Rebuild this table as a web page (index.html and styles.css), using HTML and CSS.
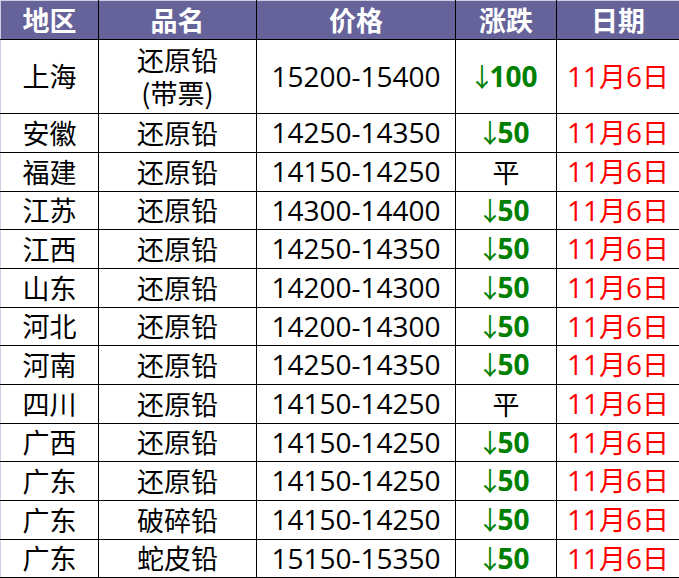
FILE: index.html
```html
<!DOCTYPE html>
<html lang="zh">
<head>
<meta charset="utf-8">
<link rel="stylesheet" href="styles.css">
</head>
<body>
<table class="price-table">
  <colgroup>
    <col class="c1"><col class="c2"><col class="c3"><col class="c4"><col class="c5">
  </colgroup>
  <thead>
    <tr class="head"><th>地区</th><th>品名</th><th>价格</th><th>涨跌</th><th>日期</th></tr>
  </thead>
  <tbody>
    <tr class="tall"><td>上海</td><td class="two">还原铅<br>(带票)</td><td class="num">15200-15400</td><td class="down"><span class="arr">↓</span>100</td><td class="date"><span class="n">11</span>月<span class="n">6</span>日</td></tr>
    <tr class="r39"><td>安徽</td><td>还原铅</td><td class="num">14250-14350</td><td class="down"><span class="arr">↓</span>50</td><td class="date"><span class="n">11</span>月<span class="n">6</span>日</td></tr>
    <tr class="r39"><td>福建</td><td>还原铅</td><td class="num">14150-14250</td><td class="flat">平</td><td class="date"><span class="n">11</span>月<span class="n">6</span>日</td></tr>
    <tr class="r38"><td>江苏</td><td>还原铅</td><td class="num">14300-14400</td><td class="down"><span class="arr">↓</span>50</td><td class="date"><span class="n">11</span>月<span class="n">6</span>日</td></tr>
    <tr class="r39"><td>江西</td><td>还原铅</td><td class="num">14250-14350</td><td class="down"><span class="arr">↓</span>50</td><td class="date"><span class="n">11</span>月<span class="n">6</span>日</td></tr>
    <tr class="r39"><td>山东</td><td>还原铅</td><td class="num">14200-14300</td><td class="down"><span class="arr">↓</span>50</td><td class="date"><span class="n">11</span>月<span class="n">6</span>日</td></tr>
    <tr class="r38"><td>河北</td><td>还原铅</td><td class="num">14200-14300</td><td class="down"><span class="arr">↓</span>50</td><td class="date"><span class="n">11</span>月<span class="n">6</span>日</td></tr>
    <tr class="r39"><td>河南</td><td>还原铅</td><td class="num">14250-14350</td><td class="down"><span class="arr">↓</span>50</td><td class="date"><span class="n">11</span>月<span class="n">6</span>日</td></tr>
    <tr class="r39"><td>四川</td><td>还原铅</td><td class="num">14150-14250</td><td class="flat">平</td><td class="date"><span class="n">11</span>月<span class="n">6</span>日</td></tr>
    <tr class="r38"><td>广西</td><td>还原铅</td><td class="num">14150-14250</td><td class="down"><span class="arr">↓</span>50</td><td class="date"><span class="n">11</span>月<span class="n">6</span>日</td></tr>
    <tr class="r39"><td>广东</td><td>还原铅</td><td class="num">14150-14250</td><td class="down"><span class="arr">↓</span>50</td><td class="date"><span class="n">11</span>月<span class="n">6</span>日</td></tr>
    <tr class="r39"><td>广东</td><td>破碎铅</td><td class="num">14150-14250</td><td class="down"><span class="arr">↓</span>50</td><td class="date"><span class="n">11</span>月<span class="n">6</span>日</td></tr>
    <tr class="r38"><td>广东</td><td>蛇皮铅</td><td class="num">15150-15350</td><td class="down"><span class="arr">↓</span>50</td><td class="date"><span class="n">11</span>月<span class="n">6</span>日</td></tr>
  </tbody>
</table>
</body>
</html>
```
FILE: styles.css
```css
html, body {
  margin: 0;
  padding: 0;
  background: #ffffff;
}
.price-table {
  border-collapse: collapse;
  table-layout: fixed;
  width: 679px;
  font-family: "Noto Sans CJK SC", "Noto Sans", sans-serif;
  font-size: 27px;
  color: #000;
}
.c1 { width: 98px; }
.c2 { width: 158px; }
.c3 { width: 199px; }
.c4 { width: 101px; }
.c5 { width: 123px; }
.price-table th,
.price-table td {
  border: 1px solid #000;
  padding: 0;
  text-align: center;
  vertical-align: middle;
  line-height: 1.2;
  white-space: nowrap;
}
.price-table tr > :first-child { border-left-color: #cfd0e2; }
.head th {
  background: #66639b;
  color: #fff;
  font-weight: bold;
  height: 38px;
  line-height: 1.1;
  border-top-color: #cfd0e2;
}
.tall td { height: 73px; }
.two { line-height: 1.26; }
.r39 td { height: 38px; }
.r38 td { height: 37px; }
.num {
  font-family: "Open Sans", "Noto Sans CJK SC", sans-serif;
  font-size: 28px;
}
.down {
  color: #008000;
  font-weight: bold;
  font-family: "Open Sans", sans-serif;
  font-size: 28px;
}
.arr {
  display: inline-flex;
  justify-content: center;
  width: 15px;
  font-weight: normal;
  font-family: "Noto Sans CJK SC", sans-serif;
  font-size: 26px;
}
.date { color: #ff0000; }
.n {
  font-family: "Open Sans", sans-serif;
  font-size: 28px;
}
```
